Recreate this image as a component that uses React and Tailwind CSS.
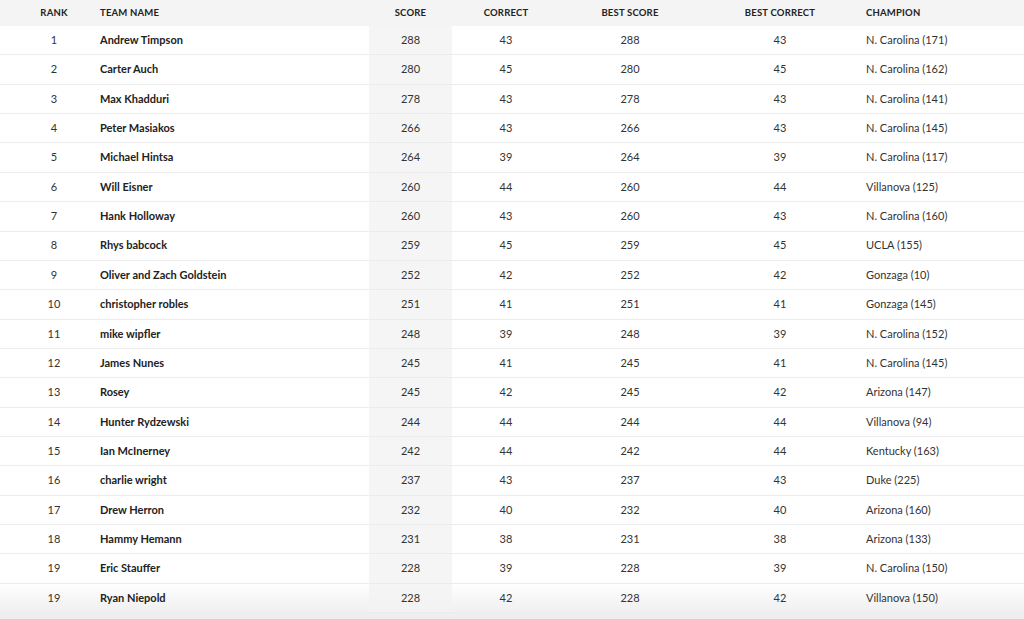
import React from 'react';

const rows = [
  [1, 'Andrew Timpson', 288, 43, 288, 43, 'N. Carolina (171)'],
  [2, 'Carter Auch', 280, 45, 280, 45, 'N. Carolina (162)'],
  [3, 'Max Khadduri', 278, 43, 278, 43, 'N. Carolina (141)'],
  [4, 'Peter Masiakos', 266, 43, 266, 43, 'N. Carolina (145)'],
  [5, 'Michael Hintsa', 264, 39, 264, 39, 'N. Carolina (117)'],
  [6, 'Will Eisner', 260, 44, 260, 44, 'Villanova (125)'],
  [7, 'Hank Holloway', 260, 43, 260, 43, 'N. Carolina (160)'],
  [8, 'Rhys babcock', 259, 45, 259, 45, 'UCLA (155)'],
  [9, 'Oliver and Zach Goldstein', 252, 42, 252, 42, 'Gonzaga (10)'],
  [10, 'christopher robles', 251, 41, 251, 41, 'Gonzaga (145)'],
  [11, 'mike wipfler', 248, 39, 248, 39, 'N. Carolina (152)'],
  [12, 'James Nunes', 245, 41, 245, 41, 'N. Carolina (145)'],
  [13, 'Rosey', 245, 42, 245, 42, 'Arizona (147)'],
  [14, 'Hunter Rydzewski', 244, 44, 244, 44, 'Villanova (94)'],
  [15, 'Ian McInerney', 242, 44, 242, 44, 'Kentucky (163)'],
  [16, 'charlie wright', 237, 43, 237, 43, 'Duke (225)'],
  [17, 'Drew Herron', 232, 40, 232, 40, 'Arizona (160)'],
  [18, 'Hammy Hemann', 231, 38, 231, 38, 'Arizona (133)'],
  [19, 'Eric Stauffer', 228, 39, 228, 39, 'N. Carolina (150)'],
  [19, 'Ryan Niepold', 228, 42, 228, 42, 'Villanova (150)'],
];

const App = () => {
  return (
    <div className="relative isolate w-[1024px] h-[619px] overflow-hidden bg-white text-[11px] text-[#333] font-['Lato','Liberation_Sans',sans-serif]">
      {/* bottom fade, sits behind the rows */}
      <div className="absolute left-0 right-0 bottom-0 h-[36px] -z-10 bg-gradient-to-b from-white to-[#ececec]" />

      {/* Header */}
      <div className="flex items-center h-[26px] bg-[#f4f4f4] text-[9.5px] font-bold uppercase text-[#222] tracking-[0.02em]">
        <div className="w-[100px] pl-[8px] text-center">Rank</div>
        <div className="w-[269px]">Team Name</div>
        <div className="w-[83px] text-center">Score</div>
        <div className="w-[108px] text-center">Correct</div>
        <div className="w-[140px] text-center">Best Score</div>
        <div className="w-[160px] text-center">Best Correct</div>
        <div className="flex-1 pl-[6px]">Champion</div>
      </div>

      {/* Rows */}
      <div className="flex flex-col">
        {rows.map((r, i) => (
          <div key={i} className="flex items-stretch h-[29.37px] border-b border-[#ececec]">
            <div className="w-[100px] pl-[8px] flex items-center justify-center">{r[0]}</div>
            <div className="w-[269px] flex items-center font-bold text-[#222]">{r[1]}</div>
            <div className="w-[83px] flex items-center justify-center bg-[#f3f3f3]/80">{r[2]}</div>
            <div className="w-[108px] flex items-center justify-center">{r[3]}</div>
            <div className="w-[140px] flex items-center justify-center">{r[4]}</div>
            <div className="w-[160px] flex items-center justify-center">{r[5]}</div>
            <div className="flex-1 pl-[6px] flex items-center">{r[6]}</div>
          </div>
        ))}
      </div>
    </div>
  );
};

export default App;
